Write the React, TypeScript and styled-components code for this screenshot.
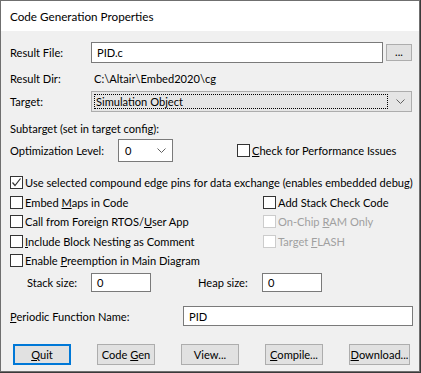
import React from 'react';
import styled, { createGlobalStyle } from 'styled-components';

const GlobalStyle = createGlobalStyle`
    html, body {
        margin: 0;
        padding: 0;
        background: #3a3a3a;
    }
    body {
        width: 421px;
        height: 373px;
        overflow: hidden;
    }
`;

const Window = styled.div`
    width: 418px;
    height: 370px;
    border: 1px solid #6f6f6f;
    background: #f0f0f0;
    display: flex;
    flex-direction: column;
    font-family: Lato, "Noto Sans", sans-serif;
    font-size: 11.1px;
    color: #000;
`;

const TitleBar = styled.div`
    height: 30px;
    background: #fff;
    display: flex;
    align-items: center;
    padding-left: 9px;
    font-size: 11.7px;
`;

const Client = styled.div`
    display: flex;
    flex-direction: column;
    padding: 0 7px 0 9px;
`;

interface RowProps {
    $mt: number;
    $h: number;
}

const Row = styled.div<RowProps>`
    display: flex;
    align-items: center;
    margin-top: ${({ $mt }) => $mt}px;
    height: ${({ $h }) => $h}px;
    white-space: nowrap;
`;

const Label = styled.span<{ $w?: number; $indent?: number }>`
    width: ${({ $w }) => ($w ? `${$w}px` : 'auto')};
    padding-left: ${({ $indent }) => $indent || 0}px;
    box-sizing: border-box;
    flex-shrink: 0;
`;

const TextBox = styled.div<{ $w: number }>`
    width: ${({ $w }) => $w}px;
    height: 100%;
    box-sizing: border-box;
    border: 1px solid #7a7a7a;
    background: #fff;
    display: flex;
    align-items: center;
    padding-left: 5px;
    flex-shrink: 0;
`;

const BrowseButton = styled.div`
    width: 27px;
    height: 17px;
    margin-left: 3px;
    box-sizing: border-box;
    border: 1px solid #adadad;
    background: #e1e1e1;
    display: flex;
    align-items: center;
    justify-content: center;
    padding-bottom: 3px;
`;

const DirValue = styled.span`
    margin-left: 3px;
`;

const Select = styled.div<{ $w: number; $flat?: boolean }>`
    width: ${({ $w }) => $w}px;
    height: 100%;
    box-sizing: border-box;
    border: 1px solid ${({ $flat }) => ($flat ? '#adadad' : '#7a7a7a')};
    background: ${({ $flat }) => ($flat ? '#e5e5e5' : '#fff')};
    display: flex;
    align-items: center;
    padding: 2px 6px 2px 2px;
    flex-shrink: 0;
`;

const SelectValue = styled.div<{ $focus?: boolean }>`
    flex: 1;
    height: 100%;
    box-sizing: border-box;
    display: flex;
    align-items: center;
    padding-left: ${({ $focus }) => ($focus ? 1 : 3)}px;
    border: 1px dotted ${({ $focus }) => ($focus ? '#000' : 'transparent')};
    margin-right: ${({ $focus }) => ($focus ? 8 : 0)}px;
`;

const CheckRow = styled.label<{ $disabled?: boolean }>`
    display: flex;
    align-items: center;
    gap: 2px;
    color: ${({ $disabled }) => ($disabled ? '#a0a0a0' : '#000')};
    white-space: nowrap;
`;

const Box = styled.span<{ $disabled?: boolean }>`
    width: 13px;
    height: 13px;
    box-sizing: border-box;
    border: 1px solid ${({ $disabled }) => ($disabled ? '#cccccc' : '#333333')};
    background: #fff;
    display: flex;
    align-items: center;
    justify-content: center;
    flex-shrink: 0;
`;

const CheckGrid = styled.div`
    display: grid;
    grid-template-columns: 253px 1fr;
    grid-auto-rows: 19.5px;
    margin-top: 2.25px;
    align-items: center;
`;

const Mn = styled.span`
    text-decoration: underline;
    text-underline-offset: 1px;
`;

const ButtonBar = styled.div`
    display: flex;
    gap: 26px;
    margin-top: 18px;
    padding-left: 3px;
    height: 21px;
`;

const Button = styled.div<{ $w?: number; $default?: boolean }>`
    width: ${({ $w }) => $w || 58}px;
    height: 100%;
    box-sizing: border-box;
    border: ${({ $default }) => ($default ? '2px solid #0078d7' : '1px solid #adadad')};
    background: #e1e1e1;
    display: flex;
    align-items: center;
    justify-content: center;
    white-space: nowrap;
`;

const Chevron: React.FC = () => (
    <svg width="9" height="5" viewBox="0 0 9 5">
        <polyline points="0.5,0.5 4.5,4.5 8.5,0.5" fill="none" stroke="#606060" strokeWidth="1" />
    </svg>
);

const Check: React.FC<{ checked?: boolean; disabled?: boolean; children: React.ReactNode }> = ({
    checked,
    disabled,
    children,
}) => (
    <CheckRow $disabled={disabled}>
        <Box $disabled={disabled}>
            {checked && (
                <svg width="11" height="11" viewBox="0 0 11 11">
                    <polyline points="1.5,5.5 4,8.5 9.5,1.5" fill="none" stroke="#333" strokeWidth="1.2" />
                </svg>
            )}
        </Box>
        <span>{children}</span>
    </CheckRow>
);

const App: React.FC = () => {
    return (
        <>
            <GlobalStyle />
            <Window>
                <TitleBar>Code Generation Properties</TitleBar>
                <Client>
                    <Row $mt={11} $h={21}>
                        <Label $w={81}>Result File:</Label>
                        <TextBox $w={292}>PID.c</TextBox>
                        <BrowseButton>...</BrowseButton>
                    </Row>
                    <Row $mt={7} $h={16}>
                        <Label $w={81}>Result Dir:</Label>
                        <DirValue>C:\Altair\Embed2020\cg</DirValue>
                    </Row>
                    <Row $mt={5} $h={21}>
                        <Label $w={81}>Target:</Label>
                        <Select $w={321} $flat>
                            <SelectValue $focus>Simulation Object</SelectValue>
                            <Chevron />
                        </Select>
                    </Row>
                    <Row $mt={8} $h={16}>
                        <Label>Subtarget (set in target config):</Label>
                    </Row>
                    <Row $mt={3} $h={23}>
                        <Label $w={108}>Optimization Level:</Label>
                        <Select $w={55}>
                            <SelectValue>0</SelectValue>
                            <Chevron />
                        </Select>
                        <Label $w={64} />
                        <Check>
                            <Mn>C</Mn>heck for Performance Issues
                        </Check>
                    </Row>
                    <Row $mt={12} $h={16}>
                        <Check checked>Use selected compound edge pins for data exchange (enables embedded debug)</Check>
                    </Row>
                    <CheckGrid>
                        <Check>
                            Embed <Mn>M</Mn>aps in Code
                        </Check>
                        <Check>Add Stack Check Code</Check>
                        <Check>
                            Call from Foreign RTOS/<Mn>U</Mn>ser App
                        </Check>
                        <Check disabled>
                            On-Chip <Mn>R</Mn>AM Only
                        </Check>
                        <Check>
                            <Mn>I</Mn>nclude Block Nesting as Comment
                        </Check>
                        <Check disabled>
                            Target <Mn>F</Mn>LASH
                        </Check>
                        <Check>
                            Enable <Mn>P</Mn>reemption in Main Diagram
                        </Check>
                    </CheckGrid>
                    <Row $mt={2.75} $h={19}>
                        <Label $w={81} $indent={17}>Stack size:</Label>
                        <TextBox $w={60}>0</TextBox>
                        <Label $w={111} $indent={47}>Heap size:</Label>
                        <TextBox $w={60}>0</TextBox>
                    </Row>
                    <Row $mt={14} $h={20}>
                        <Label $w={173}>
                            <Mn>P</Mn>eriodic Function Name:
                        </Label>
                        <TextBox $w={230}>PID</TextBox>
                    </Row>
                    <ButtonBar>
                        <Button $default>
                            <span>
                                <Mn>Q</Mn>uit
                            </span>
                        </Button>
                        <Button>
                            <span>
                                Code <Mn>G</Mn>en
                            </span>
                        </Button>
                        <Button>
                            <span>View...</span>
                        </Button>
                        <Button>
                            <span>
                                <Mn>C</Mn>ompile...
                            </span>
                        </Button>
                        <Button $w={61}>
                            <span>
                                <Mn>D</Mn>ownload...
                            </span>
                        </Button>
                    </ButtonBar>
                </Client>
            </Window>
        </>
    );
};

export default App;
